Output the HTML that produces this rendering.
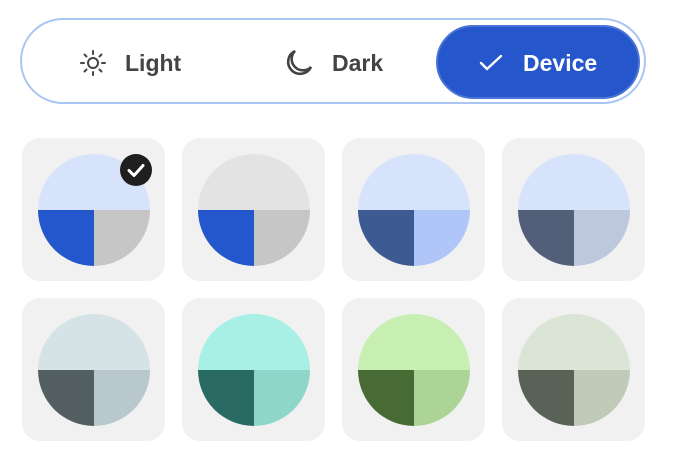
<!DOCTYPE html>
<html><head><style>
body{margin:0;width:676px;height:454px;background:#fff;font-family:"Liberation Sans",sans-serif;position:relative;overflow:hidden}
.pill{position:absolute;left:20px;top:18px;width:626px;height:86px;border:2px solid #a9c5f2;border-radius:44px;box-sizing:border-box}
.act{position:absolute;left:436px;top:25px;width:204px;height:74px;background:#2656cb;border-radius:37px;border:2px solid #4a74d6;box-sizing:border-box}
.lbl{position:absolute;top:49px;font-size:23px;font-weight:bold;color:#444;line-height:28px}
.tile{position:absolute;width:143px;height:143px;background:#f1f1f1;border-radius:18px}
.tile svg{position:absolute;left:16px;top:16px}
</style></head><body>
<div class="pill"></div>
<div class="act"></div>
<svg style="position:absolute;left:78px;top:48px" width="30" height="30" viewBox="0 0 30 30" stroke="#444" stroke-width="2" fill="none" stroke-linecap="round">
<circle cx="15" cy="15" r="5"/><path d="M15 3v3M15 24v3M3 15h3M24 15h3M6.5 6.5l2 2M21.5 21.5l2 2M6.5 23.5l2-2M21.5 8.5l2-2"/></svg>
<div class="lbl" style="left:125px">Light</div>
<svg style="position:absolute;left:283px;top:47px" width="32" height="32" viewBox="0 0 32 32" fill="none" stroke="#444" stroke-width="2.6">
<path d="M12 4 A12 12 0 1 0 28 20 A10 10 0 0 1 12 4 Z"/></svg>
<div class="lbl" style="left:332px">Dark</div>
<svg style="position:absolute;left:478px;top:50px" width="26" height="26" viewBox="0 0 26 26" fill="none" stroke="#fff" stroke-width="2.4" stroke-linecap="round"><path d="M3 13l6 6L23 6"/></svg>
<div class="lbl" style="left:523px;color:#fff">Device</div>

<div class="tile" style="left:22px;top:138px"><svg width="112" height="112"><defs><clipPath id="c"><circle cx="56" cy="56" r="56"/></clipPath></defs><g clip-path="url(#c)"><rect width="112" height="56" fill="#d6e3fb"/><rect y="56" width="56" height="56" fill="#2456cc"/><rect x="56" y="56" width="56" height="56" fill="#c6c6c6"/></g></svg></div>
<div class="tile" style="left:182px;top:138px"><svg width="112" height="112"><g clip-path="url(#c)"><rect width="112" height="56" fill="#e3e3e3"/><rect y="56" width="56" height="56" fill="#2456cc"/><rect x="56" y="56" width="56" height="56" fill="#c6c6c6"/></g></svg></div>
<div class="tile" style="left:342px;top:138px"><svg width="112" height="112"><g clip-path="url(#c)"><rect width="112" height="56" fill="#d6e3fb"/><rect y="56" width="56" height="56" fill="#3d5a93"/><rect x="56" y="56" width="56" height="56" fill="#b0c6f8"/></g></svg></div>
<div class="tile" style="left:502px;top:138px"><svg width="112" height="112"><g clip-path="url(#c)"><rect width="112" height="56" fill="#d6e3fb"/><rect y="56" width="56" height="56" fill="#535e78"/><rect x="56" y="56" width="56" height="56" fill="#bec8dd"/></g></svg></div>
<div class="tile" style="left:22px;top:298px"><svg width="112" height="112"><g clip-path="url(#c)"><rect width="112" height="56" fill="#d5e3e7"/><rect y="56" width="56" height="56" fill="#525e5f"/><rect x="56" y="56" width="56" height="56" fill="#b9c8cc"/></g></svg></div>
<div class="tile" style="left:182px;top:298px"><svg width="112" height="112"><g clip-path="url(#c)"><rect width="112" height="56" fill="#a8f0e5"/><rect y="56" width="56" height="56" fill="#296b62"/><rect x="56" y="56" width="56" height="56" fill="#8fd6ca"/></g></svg></div>
<div class="tile" style="left:342px;top:298px"><svg width="112" height="112"><g clip-path="url(#c)"><rect width="112" height="56" fill="#c7efb1"/><rect y="56" width="56" height="56" fill="#486a34"/><rect x="56" y="56" width="56" height="56" fill="#abd496"/></g></svg></div>
<div class="tile" style="left:502px;top:298px"><svg width="112" height="112"><g clip-path="url(#c)"><rect width="112" height="56" fill="#dae5d5"/><rect y="56" width="56" height="56" fill="#586256"/><rect x="56" y="56" width="56" height="56" fill="#c0cab9"/></g></svg></div>

<svg style="position:absolute;left:119px;top:153px" width="34" height="34"><circle cx="17" cy="17" r="16" fill="#1f1f1f"/><path d="M10 17.5l5 5 9-10" fill="none" stroke="#fff" stroke-width="3" stroke-linecap="round" stroke-linejoin="round"/></svg>
</body></html>
